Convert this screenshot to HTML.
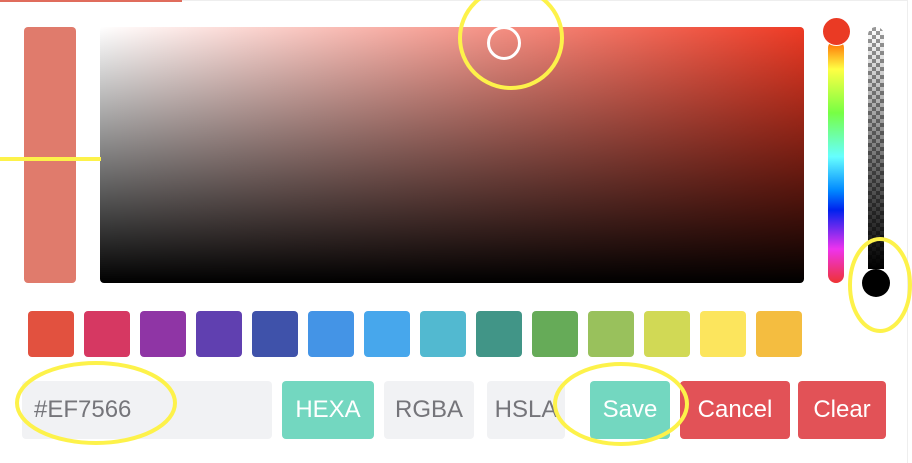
<!DOCTYPE html>
<html><head><style>
*{margin:0;padding:0;box-sizing:border-box}
body{width:912px;height:463px;background:#fff;position:relative;overflow:hidden;font-family:"Liberation Sans",sans-serif}
.a{position:absolute}
.sw{position:absolute;top:311px;width:46px;height:46px;border-radius:4px}
.btn{position:absolute;top:381px;height:58px;border-radius:4px;font-size:24px;line-height:58px;text-align:center;letter-spacing:0}
</style></head><body>
<div class="a" style="left:0;top:0;width:182px;height:2px;background:#e06c5c"></div>
<div class="a" style="left:182px;top:0;width:726px;height:1px;background:#eee"></div>
<div class="a" style="left:907px;top:0;width:1px;height:463px;background:#eee"></div>
<div class="a" style="left:24px;top:27px;width:52px;height:256px;background:#e07b6c;border-radius:4px"></div>
<div class="a" style="left:100px;top:27px;width:704px;height:256px;border-radius:4px;background:linear-gradient(to top,#000,rgba(0,0,0,0)),linear-gradient(to right,#fff,#ee3a24)"></div>
<div class="a" style="left:487px;top:26px;width:34px;height:34px;border:3px solid #fff;border-radius:50%"></div>
<div class="a" style="left:828px;top:40px;width:16px;height:243px;border-radius:8px;background:linear-gradient(to bottom,#f60 0%,#ff4 12%,#7f4 30%,#6ff 48%,#08f 62%,#02e 70%,#e3e 86%,#e33 100%)"></div>
<div class="a" style="left:822px;top:17px;width:29px;height:29px;border-radius:50%;background:#ea3a24;border:1px solid #fff"></div>
<div class="a" style="left:868px;top:27px;width:16px;height:242px;border-radius:8px 8px 0 0;background:linear-gradient(to bottom,rgba(0,0,0,0),#000),repeating-conic-gradient(#999 0 25%,#fff 0 50%) 0 0/8px 8px"></div>
<div class="a" style="left:862px;top:269px;width:28px;height:28px;border-radius:50%;background:#000"></div>
<div class="sw" style="left:28px;background:#e2513f"></div>
<div class="sw" style="left:84px;background:#d63862"></div>
<div class="sw" style="left:140px;background:#8f35a5"></div>
<div class="sw" style="left:196px;background:#6040b0"></div>
<div class="sw" style="left:252px;background:#3f52aa"></div>
<div class="sw" style="left:308px;background:#4494e6"></div>
<div class="sw" style="left:364px;background:#47a7ec"></div>
<div class="sw" style="left:420px;background:#52b9d0"></div>
<div class="sw" style="left:476px;background:#419587"></div>
<div class="sw" style="left:532px;background:#66ab58"></div>
<div class="sw" style="left:588px;background:#99c15c"></div>
<div class="sw" style="left:644px;background:#d1d955"></div>
<div class="sw" style="left:700px;background:#fce55d"></div>
<div class="sw" style="left:756px;background:#f4bd40"></div>
<div class="btn" style="left:22px;width:250px;background:#f1f2f4;color:#75757a;text-align:left;padding-left:12px">#EF7566</div>
<div class="btn" style="left:282px;width:92px;background:#73d7c0;color:#fff">HEXA</div>
<div class="btn" style="left:384px;width:90px;background:#f1f2f4;color:#75757a">RGBA</div>
<div class="btn" style="left:487px;width:78px;background:#f1f2f4;color:#75757a;overflow:hidden">HSLA</div>
<div class="btn" style="left:590px;width:80px;background:#73d7c0;color:#fff">Save</div>
<div class="btn" style="left:680px;width:110px;background:#e25257;color:#fff">Cancel</div>
<div class="btn" style="left:798px;width:88px;background:#e25257;color:#fff">Clear</div>
<svg class="a" style="left:0;top:0" width="912" height="463">
<g fill="none" stroke="#fdf24a" stroke-width="4">
<ellipse cx="511" cy="38" rx="51" ry="50"/>
<line x1="0" y1="159" x2="101" y2="159"/>
<ellipse cx="880" cy="285" rx="30" ry="46"/>
<ellipse cx="96" cy="403" rx="79" ry="40"/>
<ellipse cx="621" cy="404" rx="66" ry="40"/>
</g></svg>
</body></html>
